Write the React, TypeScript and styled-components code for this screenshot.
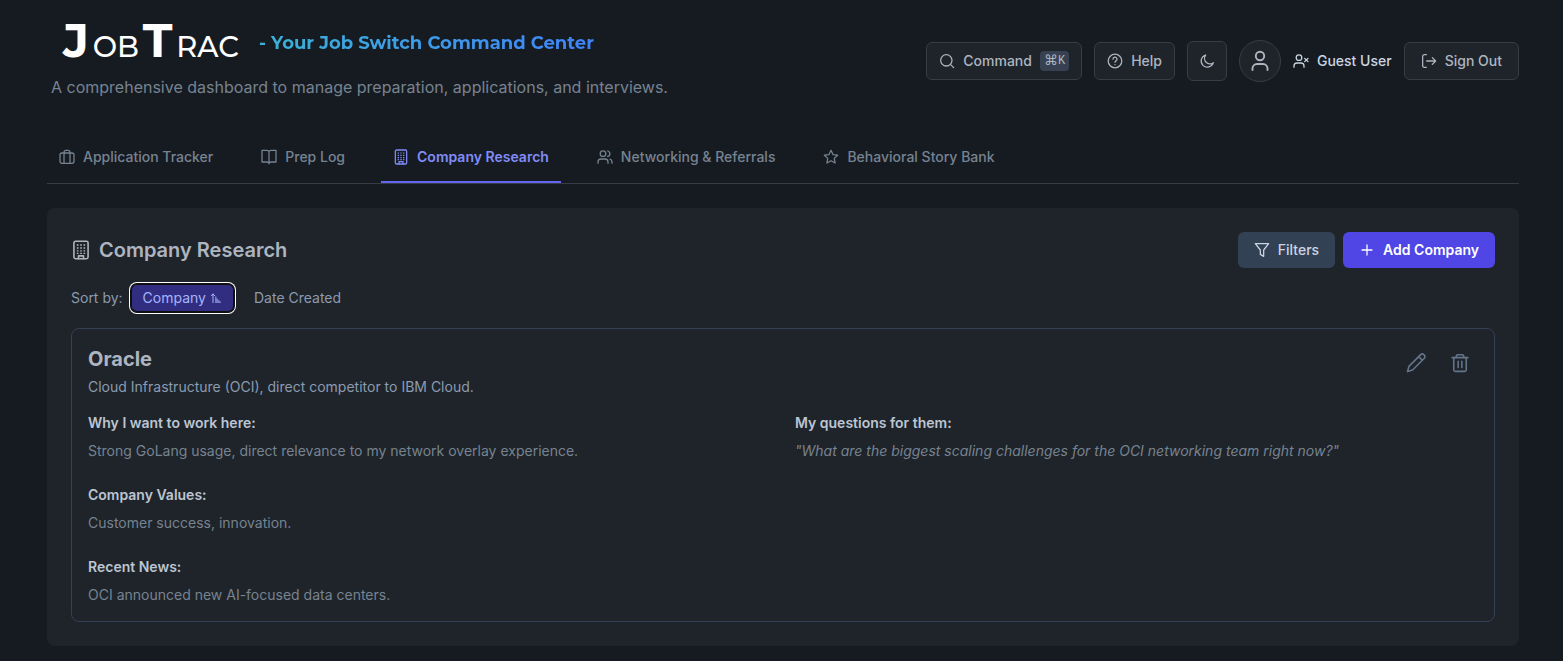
import React from "react";
import styled, { createGlobalStyle, css } from "styled-components";

const GlobalStyle = createGlobalStyle`
  *, *::before, *::after { box-sizing: border-box; }
  body {
    margin: 0;
    background: #161b22;
    color: #adb5c0;
    font-family: Inter, "Liberation Sans", sans-serif;
    font-size: 14px;
    line-height: 20px;
  }
  button { font: inherit; cursor: pointer; }
  h1, h2, h3, h4, p { margin: 0; }
`;

const Page = styled.div`
  padding: 23px 44px 15px 47px;
`;

const Header = styled.header`
  display: flex;
  justify-content: space-between;
  align-items: center;
  margin-bottom: 32px;
`;

const Brand = styled.div`
  display: flex;
  flex-direction: column;
  gap: 12px;
  padding-left: 4px;
`;

const BrandRow = styled.div`
  display: flex;
  align-items: center;
  gap: 20px;
  height: 40px;
  padding-left: 12px;
`;

const Logo = styled.h1`
  display: flex;
  align-items: baseline;
  justify-content: space-between;
  width: 176px;
  color: #ffffff;
  font-family: Montserrat, "DejaVu Sans", sans-serif;
  font-weight: 700;
  font-size: 48px;
  line-height: 40px;
`;

const LogoSmall = styled.span`
  font-size: 29px;
  font-weight: 500;
`;

const Tagline = styled.span`
  font-family: Montserrat, Inter, sans-serif;
  font-weight: 700;
  font-size: 18px;
  line-height: 28px;
  background: linear-gradient(to right, #3bb2d8, #3f83f8);
  background-clip: text;
  -webkit-background-clip: text;
  color: transparent;
`;

const Intro = styled.p`
  font-size: 16px;
  line-height: 24px;
  color: #768390;
`;

const Actions = styled.div`
  display: flex;
  align-items: center;
  gap: 12px;
`;

const HeaderButton = styled.button<{ $square?: boolean; $wide?: boolean }>`
  display: flex;
  align-items: center;
  justify-content: center;
  gap: 8px;
  height: ${(p) => (p.$square ? 40 : 38)}px;
  padding: 0 ${(p) => (p.$square ? 11 : p.$wide ? 16 : 12)}px;
  border: 1px solid #373c45;
  border-radius: 6px;
  background: #1f242a;
  color: #adb5c0;
  font-weight: 500;
`;

const Kbd = styled.kbd`
  display: flex;
  align-items: center;
  height: 20px;
  padding: 0 4px;
  border-radius: 4px;
  background: #374151;
  font-family: "Liberation Mono", "DejaVu Sans", monospace;
  font-size: 12px;
  font-weight: 400;
`;

const KbdSymbol = styled.span`
  font-size: 14px;
`;

const Avatar = styled.div`
  display: flex;
  align-items: center;
  justify-content: center;
  width: 42px;
  height: 42px;
  border: 1px solid #373c45;
  border-radius: 50%;
  background: #1f242a;
`;

const UserName = styled.div`
  display: flex;
  align-items: center;
  gap: 8px;
  color: #cbd5e1;
  font-weight: 500;
`;

const Tabs = styled.nav`
  display: flex;
  gap: 24px;
  border-bottom: 1px solid #373c45;
  margin-bottom: 24px;
`;

const Tab = styled.button<{ $active?: boolean }>`
  display: flex;
  align-items: center;
  gap: 8px;
  padding: 16px 12px;
  border: 0;
  background: none;
  color: #768390;
  font-weight: 500;
  ${(p) =>
    p.$active &&
    css`
      color: #818cf8;
      font-weight: 600;
      box-shadow: inset 0 -2px #6366f1;
    `}
`;

const Panel = styled.main`
  padding: 24px;
  border-radius: 8px;
  background: #1f242a;
`;

const PanelHeader = styled.div`
  display: flex;
  align-items: center;
  justify-content: space-between;
`;

const PanelTitle = styled.h2`
  display: flex;
  align-items: center;
  gap: 8px;
  font-size: 20px;
  line-height: 28px;
  font-weight: 600;
`;

const ButtonGroup = styled.div`
  display: flex;
  gap: 8px;
`;

const ActionButton = styled.button<{ $primary?: boolean }>`
  display: flex;
  align-items: center;
  gap: 8px;
  padding: 8px 16px;
  border: 0;
  border-radius: 6px;
  background: ${(p) => (p.$primary ? "#4f46e5" : "#334155")};
  color: ${(p) => (p.$primary ? "#ffffff" : "#cbd5e1")};
  font-weight: ${(p) => (p.$primary ? 600 : 500)};
`;

const SortRow = styled.div`
  display: flex;
  align-items: center;
  gap: 8px;
  margin: 16px 0;
  color: #8b9bb0;
`;

const SortButton = styled.button<{ $active?: boolean }>`
  display: flex;
  align-items: center;
  gap: 4px;
  padding: 4px 12px;
  border: 0;
  border-radius: 6px;
  background: ${(p) => (p.$active ? "#312e81" : "none")};
  color: ${(p) => (p.$active ? "#a5b4fc" : "#8b9bb0")};
  ${(p) =>
    p.$active &&
    css`
      box-shadow: inset 0 0 0 1px #101010, 0 0 0 1px #101010, 0 0 0 2px #ffffff;
    `}
`;

const Card = styled.article`
  padding: 16px;
  border: 1px solid #334155;
  border-radius: 8px;
`;

const CardHeader = styled.div`
  display: flex;
  justify-content: space-between;
  align-items: flex-start;
  margin-bottom: 16px;
`;

const CompanyName = styled.h3`
  font-size: 20px;
  line-height: 28px;
  font-weight: 700;
  margin-bottom: 4px;
`;

const Summary = styled.p`
  color: #8b9bb0;
`;

const CardActions = styled.div`
  display: flex;
  gap: 8px;
`;

const IconButton = styled.button`
  display: flex;
  padding: 8px;
  border: 0;
  background: none;
  color: #64748b;
`;

const Details = styled.div`
  display: grid;
  grid-template-columns: 1fr 1fr;
  gap: 24px;
`;

const Column = styled.div`
  display: flex;
  flex-direction: column;
  gap: 24px;
`;

const FieldTitle = styled.h4`
  margin-bottom: 8px;
  color: #bcc5d2;
  font-size: 14px;
  font-weight: 600;
`;

const FieldText = styled.p<{ $quote?: boolean }>`
  color: #768390;
  font-style: ${(p) => (p.$quote ? "italic" : "normal")};
`;

type IconProps = { size?: number; weight?: number; children: React.ReactNode };

const Icon = ({ size = 16, weight = 1.9, children }: IconProps) => (
  <svg
    width={size}
    height={size}
    viewBox="0 0 24 24"
    fill="none"
    stroke="currentColor"
    strokeWidth={weight}
    strokeLinecap="round"
    strokeLinejoin="round"
    aria-hidden="true"
  >
    {children}
  </svg>
);

const BuildingShapes = () => (
  <>
    <rect x="3.500" y="1.500" width="17" height="21" rx="2" />
    <path d="M9 22.500v-3.500h6v3.500" />
    <path
      d="M7 6h2M11 6h2M15 6h2M7 9.500h2M11 9.500h2M15 9.500h2M7 13h2M11 13h2M15 13h2M7 16h2M11 16h2M15 16h2"
      strokeWidth="1.700"
      strokeLinecap="butt"
    />
  </>
);

const tabs = [
  {
    label: "Application Tracker",
    shapes: (
      <>
        <rect x="1.500" y="6" width="21" height="15.500" rx="3" />
        <path d="M7.500 21.500V5a3 3 0 0 1 3-3h3a3 3 0 0 1 3 3v16.500" />
      </>
    ),
  },
  {
    label: "Prep Log",
    shapes: (
      <path d="M12 5a3 3 0 0 0-3-3H1.500v17.500H9a3 3 0 0 1 3 2.500a3 3 0 0 1 3-2.500h7.500V2H15a3 3 0 0 0-3 3v17" />
    ),
  },
  { label: "Company Research", active: true, shapes: <BuildingShapes /> },
  {
    label: "Networking & Referrals",
    shapes: (
      <>
        <circle cx="9" cy="7" r="4.200" />
        <path d="M1.500 21.500v-2a4.500 4.500 0 0 1 4.500-4.500h6a4.500 4.500 0 0 1 4.500 4.500v2M16 3a4.200 4.200 0 0 1 0 8.200M19.500 15.300a4.500 4.500 0 0 1 3 4.200v2" />
      </>
    ),
  },
  {
    label: "Behavioral Story Bank",
    shapes: (
      <path d="m12 2 3 6.400 7 .9-5.100 4.800 1.300 7-6.200-3.500-6.200 3.500 1.300-7L2 9.300l7-.9z" />
    ),
  },
];

const reasons = [
  {
    title: "Why I want to work here:",
    text: "Strong GoLang usage, direct relevance to my network overlay experience.",
  },
  { title: "Company Values:", text: "Customer success, innovation." },
  { title: "Recent News:", text: "OCI announced new AI-focused data centers." },
];

export default function App() {
  return (
    <>
      <GlobalStyle />
      <Page>
        <Header>
          <Brand>
            <BrandRow>
              <Logo aria-label="JobTrac">
                J<LogoSmall>OB</LogoSmall>T<LogoSmall>RAC</LogoSmall>
              </Logo>
              <Tagline>- Your Job Switch Command Center</Tagline>
            </BrandRow>
            <Intro>
              A comprehensive dashboard to manage preparation, applications, and interviews.
            </Intro>
          </Brand>
          <Actions>
            <HeaderButton>
              <Icon>
                <circle cx="11" cy="11" r="8.500" />
                <path d="m17.500 17.500 4.500 4.500" />
              </Icon>
              Command
              <Kbd>
                <KbdSymbol>⌘</KbdSymbol>K
              </Kbd>
            </HeaderButton>
            <HeaderButton>
              <Icon>
                <circle cx="12" cy="12" r="10.200" />
                <path d="M9 9.300a3 3 0 1 1 4.500 2.500c-1 .6-1.500 1-1.500 2.200M12 17.300v.2" />
              </Icon>
              Help
            </HeaderButton>
            <HeaderButton $square aria-label="Toggle theme">
              <Icon>
                <path d="M10 3a9.300 9.300 0 1 0 11.500 11.500A8.200 8.200 0 0 1 10 3z" />
              </Icon>
            </HeaderButton>
            <Avatar>
              <Icon size={24}>
                <circle cx="12" cy="7" r="4.200" />
                <path d="M4.500 21v-1.500A4.500 4.500 0 0 1 9 15h6a4.500 4.500 0 0 1 4.500 4.500V21" />
              </Icon>
            </Avatar>
            <UserName>
              <Icon>
                <circle cx="9" cy="7" r="4.200" />
                <path d="M1.500 21.500v-2A4.500 4.500 0 0 1 6 15h6a4.500 4.500 0 0 1 4.500 4.500v2M17.500 8l5 5M22.500 8l-5 5" />
              </Icon>
              Guest User
            </UserName>
            <HeaderButton $wide>
              <Icon>
                <path d="M8 21.500H5A2.500 2.500 0 0 1 2.500 19V5A2.500 2.500 0 0 1 5 2.500h3M8.500 12H22M17 7l5 5-5 5" />
              </Icon>
              Sign Out
            </HeaderButton>
          </Actions>
        </Header>

        <Tabs>
          {tabs.map((tab) => (
            <Tab key={tab.label} $active={tab.active}>
              <Icon>{tab.shapes}</Icon>
              {tab.label}
            </Tab>
          ))}
        </Tabs>

        <Panel>
          <PanelHeader>
            <PanelTitle>
              <Icon size={20}>
                <BuildingShapes />
              </Icon>
              Company Research
            </PanelTitle>
            <ButtonGroup>
              <ActionButton>
                <Icon>
                  <path d="M2 2.500h20L14.500 12v9.500l-5-3V12z" />
                </Icon>
                Filters
              </ActionButton>
              <ActionButton $primary>
                <Icon>
                  <path d="M12 4.500v15M4.500 12h15" />
                </Icon>
                Add Company
              </ActionButton>
            </ButtonGroup>
          </PanelHeader>

          <SortRow>
            <span>Sort by:</span>
            <SortButton $active aria-pressed>
              Company
              <Icon size={12} weight={2}>
                <path d="M6 21V4M2.500 7.500 6 4l3.500 3.500" />
                <path
                  d="M10 9h3v4h3v3h3v3h3v3H10z"
                  fill="currentColor"
                  stroke="none"
                  opacity="0.6"
                />
              </Icon>
            </SortButton>
            <SortButton>Date Created</SortButton>
          </SortRow>

          <Card>
            <CardHeader>
              <div>
                <CompanyName>Oracle</CompanyName>
                <Summary>Cloud Infrastructure (OCI), direct competitor to IBM Cloud.</Summary>
              </div>
              <CardActions>
                <IconButton aria-label="Edit company">
                  <Icon size={20}>
                    <path d="M1.800 22.300 3.500 16 17.300 2.200a3 3 0 0 1 4.400 4.400L7.900 20.400zM15.200 4.300l4.400 4.400" />
                  </Icon>
                </IconButton>
                <IconButton aria-label="Delete company">
                  <Icon size={20}>
                    <path d="M2.500 5.500h19M4.500 5.500v14.500A2 2 0 0 0 6.500 22h11a2 2 0 0 0 2-2V5.500M7.500 5.500V4a2 2 0 0 1 2-2h5a2 2 0 0 1 2 2v1.500M9.800 10v7.500M14.200 10v7.500" />
                  </Icon>
                </IconButton>
              </CardActions>
            </CardHeader>
            <Details>
              <Column>
                {reasons.map((item) => (
                  <section key={item.title}>
                    <FieldTitle>{item.title}</FieldTitle>
                    <FieldText>{item.text}</FieldText>
                  </section>
                ))}
              </Column>
              <Column>
                <section>
                  <FieldTitle>My questions for them:</FieldTitle>
                  <FieldText $quote>
                    "What are the biggest scaling challenges for the OCI networking team right now?"
                  </FieldText>
                </section>
              </Column>
            </Details>
          </Card>
        </Panel>
      </Page>
    </>
  );
}
